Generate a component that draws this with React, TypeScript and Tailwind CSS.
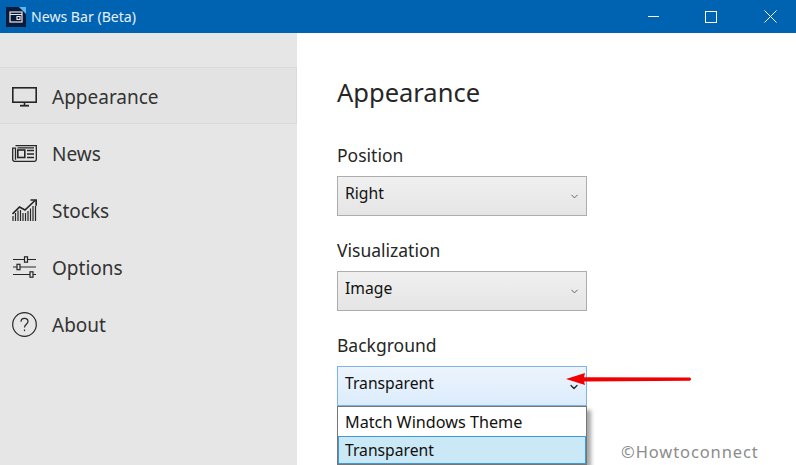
import React from "react";
import { ChevronDown } from "lucide-react";

function Monitor() {
  return (
    <svg width="25" height="20" viewBox="0 0 25 20" fill="none" stroke="#262626" strokeWidth="1.6">
      <rect x="0.8" y="0.8" width="23.4" height="14.4" />
      <path d="M12.5 15.5v2.5" />
      <path d="M8 18.7h9" strokeWidth="1.8" />
    </svg>
  );
}

function NewsIcon() {
  return (
    <svg width="25" height="17" viewBox="0 0 25 17" fill="none" stroke="#262626" strokeWidth="1.3">
      <path d="M3.5 0.7h20.8v13.8a1.8 1.8 0 0 1-1.8 1.8H2.5a1.8 1.8 0 0 1-1.8-1.8V3.2h2.8v11.5" />
      <rect x="5.8" y="5" width="7" height="7.5" strokeWidth="1.6" />
      <path d="M5.5 2.8h16.5M15 5.5h7M15 9h7M15 12.5h7" />
    </svg>
  );
}

function StocksIcon() {
  return (
    <svg width="25" height="22" viewBox="0 0 25 22" fill="none" stroke="#262626" strokeWidth="1.2">
      <path d="M0.5 15l7-7 5.5 3L23 1.5" strokeWidth="1.7" />
      <path d="M18.5 1h5.7v5.7" strokeWidth="1.7" />
      <path d="M1 22v-5M3.5 22v-8M6 22v-10.5M8.5 22v-11M11 22v-8M13.5 22v-8M16 22v-10M18.5 22v-12.5M21 22v-15M23.5 22v-15" />
    </svg>
  );
}

function OptionsIcon() {
  return (
    <svg width="23" height="22" viewBox="0 0 23 22" fill="none" stroke="#262626" strokeWidth="1.2">
      <path d="M0 3.5h23M0 11h23M0 18.5h23" />
      <rect x="11.5" y="0.8" width="3" height="5.4" fill="#e6e6e6" />
      <rect x="4" y="8.3" width="3" height="5.4" fill="#e6e6e6" />
      <rect x="17" y="15.8" width="3" height="5.4" fill="#e6e6e6" />
    </svg>
  );
}

function AboutIcon() {
  return (
    <svg width="25" height="25" viewBox="0 0 25 25" fill="none" stroke="#262626" strokeWidth="1.2">
      <circle cx="12.5" cy="12.5" r="11.8" />
      <path d="M9 9.8c0-2.2 1.6-3.4 3.5-3.4S16 7.7 16 9.5c0 2.8-3.5 2.8-3.5 6" />
      <path d="M12.5 17.5v1.6" />
    </svg>
  );
}

function NavItem({ icon, label, active }: { icon: React.ReactNode; label: string; active?: boolean }) {
  return (
    <div
      className={
        active
          ? "flex h-[57px] items-center border-y border-r border-[#dadada] bg-[#e3e3e3] pt-[2px]"
          : "flex h-[57px] items-center pt-[1px]"
      }
    >
      <div className="flex w-[52px] shrink-0 justify-center pr-[3px]">{icon}</div>
      <span className={active ? "mt-[2px] text-[19px] text-[#333333]" : "mt-[2px] text-[19px] text-[#333333]"}>{label}</span>
    </div>
  );
}

function Select({ label, value }: { label: string; value: string }) {
  return (
    <div className="mb-[20px]">
      <div className="mb-[7px] h-[28px] text-[17.5px] leading-[28px] text-[#262626]">{label}</div>
      <div className="flex h-[40px] w-[250px] items-center justify-between border border-[#adadad] bg-gradient-to-b from-[#f0f0f0] to-[#e5e5e5] pb-[5px] pl-[7px] pr-[6px] text-[15.7px] text-[#111111]">
        <span>{value}</span>
        <ChevronDown size={11} color="#555555" strokeWidth={2} className="mt-[6px]" />
      </div>
    </div>
  );
}

export default function App() {
  return (
    <div
      className="relative flex h-[465px] w-[796px] flex-col overflow-hidden bg-white"
      style={{ fontFamily: '"Noto Sans", sans-serif' }}
    >
      <div className="flex h-[33px] shrink-0 items-center bg-[#0063b1] text-white">
        <div className="relative ml-[6px] flex h-[20px] w-[20px] items-center justify-center overflow-hidden bg-[#0a1a3a]">
          <svg width="14" height="12" viewBox="0 0 14 12" fill="none" stroke="#e8e8e8" strokeWidth="1.2">
            <rect x="1" y="1" width="12" height="10" />
            <path d="M1 3.5h12M8 5.5h3v3H8z" />
          </svg>
          <div className="absolute right-[-5px] top-[-5px] h-[10px] w-[10px] rotate-45 bg-[#5cb8f0]" />
        </div>
        <span className="ml-[5px] text-[14.1px] text-[#e6f0fa]">News Bar (Beta)</span>
        <div className="ml-auto flex items-center">
          <div className="flex h-[33px] w-[57px] items-center justify-center">
            <div className="h-[1px] w-[11px] bg-white" />
          </div>
          <div className="flex h-[33px] w-[57px] items-center justify-center">
            <div className="h-[12px] w-[12px] border border-white" />
          </div>
          <div className="flex h-[33px] w-[57px] items-center justify-center pl-[5px]">
            <svg width="13" height="13" viewBox="0 0 13 13" stroke="#ffffff" strokeWidth="1">
              <path d="M0.5 0.5l12 12M12.5 0.5l-12 12" />
            </svg>
          </div>
        </div>
      </div>
      <div className="flex min-h-0 flex-1">
        <div className="w-[297px] shrink-0 bg-[#e6e6e6] pt-[34px]">
          <NavItem icon={<Monitor />} label="Appearance" active />
          <NavItem icon={<NewsIcon />} label="News" />
          <NavItem icon={<StocksIcon />} label="Stocks" />
          <NavItem icon={<OptionsIcon />} label="Options" />
          <NavItem icon={<AboutIcon />} label="About" />
        </div>
        <div className="flex-1 pl-[40px] pt-[39px]">
          <div className="mb-[29px] h-[40px] text-[25.5px] leading-[40px] text-[#262626]">Appearance</div>
          <Select label="Position" value="Right" />
          <Select label="Visualization" value="Image" />
          <div className="relative">
            <div className="mb-[7px] h-[28px] text-[17.5px] leading-[28px] text-[#262626]">Background</div>
            <div className="flex h-[40px] w-[250px] items-center justify-between border border-[#7eb4ea] bg-gradient-to-b from-[#ecf4fc] to-[#dcecfc] pb-[5px] pl-[7px] pr-[6px] text-[15.7px] text-[#111111]">
              <span>Transparent</span>
              <ChevronDown size={12} color="#222222" strokeWidth={2.5} className="mt-[6px]" />
            </div>
            <div className="w-[250px] border border-[#767676] bg-white text-[#111111] shadow-[4px_4px_4px_rgba(0,0,0,0.35)]">
              <div className="flex h-[29px] items-center pl-[7px] pt-[2px] text-[16.2px]">Match Windows Theme</div>
              <div className="flex h-[28px] items-center border border-[#3d9bd9] bg-[#cbe8f6] pl-[6px] pt-[2px] text-[15.7px]">Transparent</div>
            </div>
          </div>
        </div>
      </div>
      <svg className="absolute left-[565px] top-[372px]" width="128" height="14" viewBox="0 0 128 14">
        <path d="M1 7L20 1L19 5.2L125 5.4Q127 7 125 8.8L19 9.4L20 13Z" fill="#f00000" />
      </svg>
      <div className="absolute left-[621px] top-[441px] text-[16.5px] leading-[22px] tracking-[0.9px] text-[#8c8c8c]">©Howtoconnect</div>
    </div>
  );
}
